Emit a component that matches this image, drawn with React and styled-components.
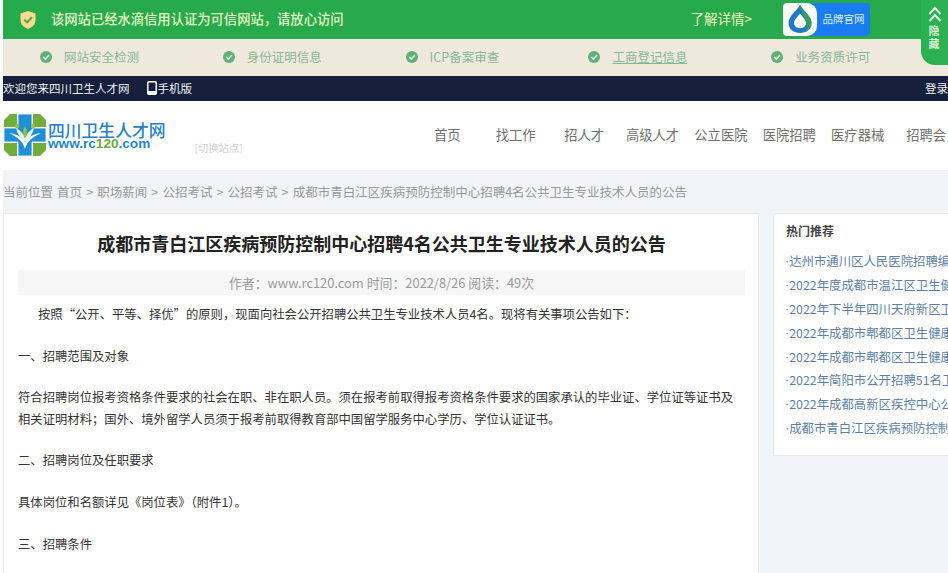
import React from 'react';
import styled, { createGlobalStyle } from 'styled-components';

const GlobalStyle = createGlobalStyle`
  html, body {
    margin: 0;
    padding: 0;
    width: 948px;
    height: 573px;
    overflow: hidden;
    background: #fff;
    font-family: "Noto Sans CJK SC", "Liberation Sans", sans-serif;
  }
`;

const checks = [
  { label: '网站安全检测' },
  { label: '身份证明信息' },
  { label: 'ICP备案审查' },
  { label: '工商登记信息', link: true },
  { label: '业务资质许可' },
];

const navItems = ['首页', '找工作', '招人才', '高级人才', '公立医院', '医院招聘', '医疗器械', '招聘会'];

const hotItems = [
  '达州市通川区人民医院招聘编',
  '2022年度成都市温江区卫生健',
  '2022年下半年四川天府新区卫',
  '2022年成都市郫都区卫生健康',
  '2022年成都市郫都区卫生健康',
  '2022年简阳市公开招聘51名卫',
  '2022年成都高新区疾控中心公',
  '成都市青白江区疾病预防控制',
];

const paragraphs = [
  { text: '按照“公开、平等、择优”的原则，现面向社会公开招聘公共卫生专业技术人员4名。现将有关事项公告如下：', indent: true },
  { text: '一、招聘范围及对象' },
  { text: '符合招聘岗位报考资格条件要求的社会在职、非在职人员。须在报考前取得报考资格条件要求的国家承认的毕业证、学位证等证书及相关证明材料；国外、境外留学人员须于报考前取得教育部中国留学服务中心学历、学位认证证书。' },
  { text: '二、招聘岗位及任职要求' },
  { text: '具体岗位和名额详见《岗位表》（附件1）。' },
  { text: '三、招聘条件' },
];

const Shield = () => (
  <svg width="18" height="20" viewBox="0 0 18 20">
    <path d="M9 1 L16.5 3.5 V10 C16.5 14.5 13 17.5 9 19 C5 17.5 1.5 14.5 1.5 10 V3.5 Z" fill="#f4dc8c" />
    <path d="M5.2 9.6 L8.1 12.4 L13 7.2" fill="none" stroke="#5f9a52" strokeWidth="2" />
  </svg>
);

const CheckDot = () => (
  <svg width="12" height="12" viewBox="0 0 12 12">
    <circle cx="6" cy="6" r="6" fill="#5cb27a" />
    <path d="M3.2 6 L5.3 8 L8.9 4.2" fill="none" stroke="#efe8dc" strokeWidth="1.6" />
  </svg>
);

const Drop = () => (
  <svg width="26" height="30" viewBox="0 0 26 30">
    <path d="M13 1 C16 6.5 24.5 12 24.5 19 C24.5 25 19.5 29 13 29 C6.5 29 1.5 25 1.5 19 C1.5 12 10 6.5 13 1 Z" fill="#1f77d0" />
    <path d="M13 1 C16 6.5 24.5 12 24.5 19 C24.5 23 22 26.5 18 28 C20 25 20 22 19 19 C18 14 14.5 9 13 1 Z" fill="#2f9e58" />
    <path d="M13 9.5 C15.2 12.5 19 15.5 19 19 C19 22.2 16.4 24.2 13 24.2 C9.6 24.2 7 22.2 7 19 C7 15.5 10.8 12.5 13 9.5 Z" fill="#fff" />
  </svg>
);

const Phone = () => (
  <svg width="10" height="14" viewBox="0 0 10 14">
    <rect x="0.75" y="0.75" width="8.5" height="12.5" rx="1.2" fill="none" stroke="#fff" strokeWidth="1.5" />
    <rect x="0.75" y="10" width="8.5" height="3.2" fill="#fff" />
  </svg>
);

const Chevrons = () => (
  <svg width="14" height="18" viewBox="0 0 14 18">
    <path d="M1.5 8 L7 2 L12.5 8 M1.5 15 L7 9 L12.5 15" fill="none" stroke="#e8f5e8" strokeWidth="2" />
  </svg>
);

const Logo = () => (
  <svg width="44" height="44" viewBox="0 0 44 44">
    <path d="M7 1 H14 V14 H1 V7 Z M30 1 H37 L43 7 V14 H30 Z M1 30 H14 V43 H7 L1 37 Z M30 30 H43 V37 L37 43 H30 Z" fill="#72ad3a" />
    <path d="M15 1 H29 V15 H43 V29 H29 V43 H15 V29 H1 V15 H15 Z" fill="#1f8fd6" stroke="#fff" strokeWidth="0.8" />
    <path d="M22 36 C20 28 14 24 6 20 C14 21 19 24 22 29 C25 24 30 21 38 20 C30 24 24 28 22 36 Z" fill="#fff" />
    <path d="M22 29 C17 25 14 20 13 15 C17 17 20 20 22 25 C24 20 27 17 31 15 C30 20 27 25 22 29 Z" fill="#e6f6e0" />
    <path d="M22 25 C19.5 21 19.5 17 22 13 C24.5 17 24.5 21 22 25 Z" fill="#8cc63f" />
    <circle cx="14" cy="13" r="2.2" fill="#8cc63f" />
    <circle cx="30" cy="13" r="2.2" fill="#8cc63f" />
  </svg>
);

export default function App() {
  return (
    <Page>
      <GlobalStyle />
      <TrustBar>
        <TrustLeft>
          <Shield />
          <TrustText>该网站已经水滴信用认证为可信网站，请放心访问</TrustText>
        </TrustLeft>
        <MoreLink>了解详情&gt;</MoreLink>
        <BrandButton>
          <BrandIcon>
            <Drop />
          </BrandIcon>
          <BrandLabel>品牌官网</BrandLabel>
        </BrandButton>
      </TrustBar>
      <HideTab>
        <Chevrons />
        <HideText>隐藏</HideText>
      </HideTab>
      <CheckBar>
        {checks.map((item) => (
          <CheckItem key={item.label}>
            <CheckDot />
            <CheckLabel $link={item.link}>{item.label}</CheckLabel>
          </CheckItem>
        ))}
      </CheckBar>
      <TopBar>
        <TopLeft>
          <span>欢迎您来四川卫生人才网</span>
          <MobileLink>
            <Phone />
            手机版
          </MobileLink>
        </TopLeft>
        <span>登录</span>
      </TopBar>
      <Header>
        <LogoWrap>
          <Logo />
          <LogoText>
            <LogoName>四川卫生人才网</LogoName>
            <LogoUrl>
              www.rc<LogoNum>120</LogoNum>.com
            </LogoUrl>
          </LogoText>
        </LogoWrap>
        <SwitchSite>[切换站点]</SwitchSite>
        <Nav>
          {navItems.map((item) => (
            <NavItem key={item}>{item}</NavItem>
          ))}
        </Nav>
      </Header>
      <Content>
        <Crumb>当前位置 首页 &gt; 职场薪闻 &gt; 公招考试 &gt; 公招考试 &gt; 成都市青白江区疾病预防控制中心招聘4名公共卫生专业技术人员的公告</Crumb>
        <Columns>
          <Article>
            <Title>成都市青白江区疾病预防控制中心招聘4名公共卫生专业技术人员的公告</Title>
            <Meta>作者：www.rc120.com 时间：2022/8/26 阅读：49次</Meta>
            {paragraphs.map((p) => (
              <Para key={p.text} $indent={p.indent}>
                {p.text}
              </Para>
            ))}
          </Article>
          <Side>
            <SideTitle>热门推荐</SideTitle>
            {hotItems.map((item, i) => (
              <HotItem key={i}>
                <HotDot>·</HotDot>
                {item}
              </HotItem>
            ))}
          </Side>
        </Columns>
      </Content>
    </Page>
  );
}

const Page = styled.div`
  position: relative;
  width: 948px;
  height: 573px;
  padding-left: 3px;
  box-sizing: border-box;
  overflow: hidden;
  background: #fff;
`;

const TrustBar = styled.div`
  display: flex;
  align-items: center;
  height: 39px;
  padding-left: 16px;
  padding-right: 78px;
  box-sizing: border-box;
  background: #27aa4b;
`;

const TrustLeft = styled.div`
  display: flex;
  align-items: center;
  gap: 14px;
  flex: 1;
`;

const TrustText = styled.span`
  padding-bottom: 3px;
  font-size: 13.3px;
  font-weight: 500;
  color: #e2f3c6;
`;

const MoreLink = styled.span`
  padding-bottom: 3px;
  font-size: 13.5px;
  color: #eef6b8;
  margin-right: 31px;
`;

const BrandButton = styled.div`
  display: flex;
  width: 87px;
  height: 33px;
  margin-bottom: 1px;
  border-radius: 4px;
  overflow: hidden;
  background: #1a7cf0;
`;

const BrandIcon = styled.div`
  display: flex;
  align-items: center;
  justify-content: center;
  width: 34px;
  background: #fff;
  border-radius: 0 10px 10px 0;
`;

const BrandLabel = styled.span`
  flex: 1;
  font-size: 10.5px;
  line-height: 32px;
  text-align: center;
  color: #dff0ff;
`;

const HideTab = styled.div`
  position: absolute;
  top: 0;
  right: 0;
  width: 27px;
  height: 65px;
  padding-top: 6px;
  box-sizing: border-box;
  display: flex;
  flex-direction: column;
  align-items: center;
  background: #2bb052;
  border-radius: 0 0 0 14px;
`;

const HideText = styled.span`
  width: 12px;
  font-size: 11px;
  line-height: 13px;
  font-weight: 700;
  color: #dcefd8;
`;

const CheckBar = styled.div`
  display: flex;
  align-items: center;
  height: 37px;
  box-sizing: border-box;
  padding: 0 0 1px 37px;
  background: #efe8dc;
`;

const CheckItem = styled.div`
  display: flex;
  align-items: center;
  gap: 12px;
  width: 182.8px;
  flex-shrink: 0;
`;

const CheckLabel = styled.span`
  padding-bottom: 1px;
  font-size: 12.5px;
  color: #86b897;
  text-decoration: ${(props) => (props.$link ? 'underline' : 'none')};
`;

const TopBar = styled.div`
  display: flex;
  align-items: center;
  justify-content: space-between;
  height: 25px;
  box-sizing: border-box;
  padding-bottom: 1px;
  background: #16203c;
  font-size: 11.5px;
  color: #f2f2f2;
  white-space: nowrap;
`;

const TopLeft = styled.div`
  display: flex;
  align-items: center;
  gap: 17px;
`;

const MobileLink = styled.span`
  display: flex;
  align-items: center;
  gap: 1px;
`;

const Header = styled.div`
  display: flex;
  align-items: flex-start;
  height: 69px;
  background: #fff;
`;

const LogoWrap = styled.div`
  display: flex;
  align-items: center;
  gap: 1px;
  margin-top: 12px;
  flex-shrink: 0;
`;

const LogoText = styled.div`
  display: flex;
  flex-direction: column;
`;

const LogoName = styled.span`
  font-size: 16.8px;
  line-height: 17px;
  font-weight: 500;
  color: #2a7fc8;
  white-space: nowrap;
`;

const LogoUrl = styled.span`
  margin-top: -1px;
  font-family: "Liberation Sans", sans-serif;
  font-size: 13.6px;
  line-height: 11px;
  font-weight: 700;
  color: #1f86c9;
`;

const LogoNum = styled.span`
  color: #6aa93a;
`;

const SwitchSite = styled.span`
  margin: 39px 0 0 29px;
  font-size: 10.3px;
  color: #cfcfcf;
  white-space: nowrap;
  flex-shrink: 0;
`;

const Nav = styled.nav`
  display: flex;
  margin-left: 170.5px;
  flex-shrink: 0;
`;

const NavItem = styled.a`
  width: 68.4px;
  flex-shrink: 0;
  text-align: center;
  font-size: 13.3px;
  line-height: 67px;
  color: #707070;
  white-space: nowrap;
`;

const Content = styled.div`
  margin-left: 0;
  height: 403px;
  background: #f1f3f6;
`;

const Crumb = styled.div`
  height: 43px;
  font-size: 12.5px;
  line-height: 44px;
  word-spacing: 1.3px;
  color: #999;
  white-space: nowrap;
`;

const Columns = styled.div`
  display: flex;
  align-items: flex-start;
  gap: 14px;
`;

const Article = styled.div`
  width: 756px;
  height: 400px;
  flex-shrink: 0;
  box-sizing: border-box;
  padding: 0 13px 0 14px;
  background: #fff;
  border: 1px solid #e8eaee;
`;

const Title = styled.h1`
  margin: 14px 0 12px;
  font-size: 18px;
  line-height: 30px;
  font-weight: 700;
  text-align: center;
  color: #222;
  white-space: nowrap;
`;

const Meta = styled.div`
  height: 25px;
  margin-bottom: 9px;
  font-size: 12.88px;
  line-height: 26px;
  text-align: center;
  color: #9a9a9a;
  background: #f6f6f6;
`;

const Para = styled.p`
  margin: 0 0 20.4px;
  font-size: 12.33px;
  line-height: 21.3px;
  color: #333;
  text-indent: ${(props) => (props.$indent ? '20px' : '0')};
`;

const Side = styled.div`
  width: 300px;
  height: 243px;
  flex-shrink: 0;
  box-sizing: border-box;
  padding: 7px 12px;
  background: #fff;
  border: 1px solid #e8eaee;
`;

const SideTitle = styled.div`
  margin-bottom: 8px;
  font-size: 12px;
  line-height: 20px;
  font-weight: 700;
  color: #444;
`;

const HotItem = styled.div`
  display: flex;
  align-items: center;
  height: 23.9px;
  margin-left: -1px;
  font-size: 12.4px;
  color: #5d7fa8;
  white-space: nowrap;
`;

const HotDot = styled.span`
  font-family: "Liberation Sans", sans-serif;
`;
